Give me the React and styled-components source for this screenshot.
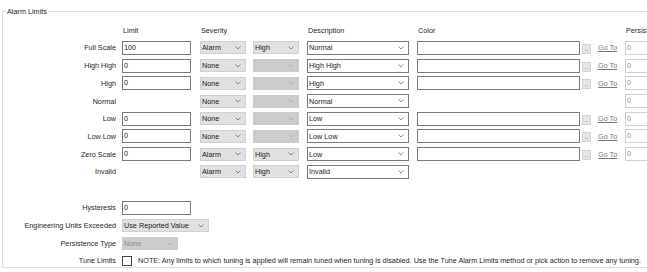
import React from 'react';
import styled, { createGlobalStyle } from 'styled-components';

const GlobalStyle = createGlobalStyle`
  html, body {
    margin: 0;
    padding: 0;
    background: #fff;
  }
  body {
    font-family: "Liberation Sans", Arial, sans-serif;
    font-size: 7.25px;
    color: #262626;
    overflow: hidden;
  }
`;

const Page = styled.div`
  width: 647px;
  height: 272px;
  overflow: hidden;
`;

const Group = styled.fieldset`
  margin: 7px 0 0 2px;
  padding: 0;
  width: 720px;
  min-width: 0;
  border: 1px solid #dedede;
`;

const Legend = styled.legend`
  margin-left: 3px;
  padding: 0 1px;
  line-height: 9px;
`;

const Table = styled.div`
  display: grid;
  grid-template-columns: 119px 78px 53px 54px 110px 165px 16px 27px 80px;
  grid-auto-rows: 14px;
  row-gap: 3.7px;
  align-items: center;
  margin-top: 7.3px;
`;

const Options = styled.div`
  display: grid;
  grid-template-columns: 119px 1fr;
  grid-template-rows: 14px 14px 14px 12px;
  row-gap: 4px;
  align-items: center;
  margin-top: 22px;
`;

const Header = styled.div`
  padding-left: 1px;
  white-space: nowrap;
`;

const Label = styled.div`
  justify-self: end;
  padding-right: 6px;
  white-space: nowrap;
`;

const TextBox = styled.div`
  box-sizing: border-box;
  width: ${(p) => p.$width}px;
  height: 14px;
  padding: 0 1px;
  line-height: 11px;
  border: 1px solid ${(p) => (p.$disabled ? '#cfcfcf' : '#7a7a7a')};
  color: ${(p) => (p.$disabled ? '#8a8a8a' : '#1a1a1a')};
  background: #fff;
  white-space: nowrap;
`;

const comboLook = {
  button: { bg: '#e1e1e1', border: '#d0d0d0', text: '#1a1a1a', arrow: '#6f6f6f', h: 13 },
  list: { bg: '#fff', border: '#7a7a7a', text: '#1a1a1a', arrow: '#6f6f6f', h: 14 },
  disabled: { bg: '#cccccc', border: '#cccccc', text: '#8a8a8a', arrow: '#a8a8a8', h: 13 },
};

const ComboBox = styled.div`
  box-sizing: border-box;
  display: flex;
  align-items: center;
  justify-content: space-between;
  width: ${(p) => p.$width}px;
  height: ${(p) => comboLook[p.$look].h}px;
  padding: 0 4px 0 1px;
  border: 1px solid ${(p) => comboLook[p.$look].border};
  background: ${(p) => comboLook[p.$look].bg};
  color: ${(p) => comboLook[p.$look].text};
  white-space: nowrap;
`;

const Chevron = ({ color }) => (
  <svg width="6" height="4" viewBox="0 0 6 4">
    <polyline points="0.5,0.5 3,3 5.5,0.5" fill="none" stroke={color} strokeWidth="0.8" />
  </svg>
);

const Combo = ({ value, width, look = 'button' }) => (
  <ComboBox $width={width} $look={look}>
    <span>{value}</span>
    <Chevron color={comboLook[look].arrow} />
  </ComboBox>
);

const BrowseButton = styled.div`
  box-sizing: border-box;
  align-self: end;
  width: 9px;
  height: 10px;
  margin-bottom: 1px;
  border: 1px solid #d4d4d4;
  background: #e6e6e6;
  color: #6a6a6a;
  font-size: 5px;
  line-height: 9px;
  letter-spacing: -0.3px;
  text-align: center;
  overflow: hidden;
`;

const GoTo = styled.span`
  color: #7a7a7a;
  text-decoration: underline;
  white-space: nowrap;
`;

const CheckBox = styled.div`
  box-sizing: border-box;
  width: 10px;
  height: 10px;
  border: 1px solid #444;
  background: #fff;
`;

const TuneRow = styled.div`
  display: flex;
  align-items: center;
  gap: 6px;
  white-space: nowrap;
`;

const rows = [
  { name: 'Full Scale', limit: '100', severity: 'Alarm', priority: 'High', desc: 'Normal', color: true, persist: true },
  { name: 'High High', limit: '0', severity: 'None', desc: 'High High', color: true, persist: true },
  { name: 'High', limit: '0', severity: 'None', desc: 'High', color: true, persist: true },
  { name: 'Normal', severity: 'None', desc: 'Normal', persist: true },
  { name: 'Low', limit: '0', severity: 'None', desc: 'Low', color: true, persist: true },
  { name: 'Low Low', limit: '0', severity: 'None', desc: 'Low Low', color: true, persist: true },
  { name: 'Zero Scale', limit: '0', severity: 'Alarm', priority: 'High', desc: 'Low', color: true, persist: true },
  { name: 'Invalid', severity: 'Alarm', priority: 'High', desc: 'Invalid' },
];

const Empty = () => <span />;

export default function App() {
  return (
    <Page>
      <GlobalStyle />
      <Group>
        <Legend>Alarm Limits</Legend>
        <Table>
          <Empty />
          <Header>Limit</Header>
          <Header>Severity</Header>
          <Empty />
          <Header>Description</Header>
          <Header>Color</Header>
          <Empty />
          <Empty />
          <Header>Persistence</Header>
          {rows.map((r) => (
            <React.Fragment key={r.name}>
              <Label>{r.name}</Label>
              {r.limit ? <TextBox $width={69}>{r.limit}</TextBox> : <Empty />}
              <Combo value={r.severity} width={46} />
              {r.priority ? <Combo value={r.priority} width={46} /> : <Combo width={46} look="disabled" />}
              <Combo value={r.desc} width={102} look="list" />
              {r.color ? <TextBox $width={163} /> : <Empty />}
              {r.color ? <BrowseButton>...</BrowseButton> : <Empty />}
              {r.color ? <GoTo>Go To</GoTo> : <Empty />}
              {r.persist ? <TextBox $width={60} $disabled>0</TextBox> : <Empty />}
            </React.Fragment>
          ))}
        </Table>
        <Options>
          <Label>Hysteresis</Label>
          <TextBox $width={69}>0</TextBox>
          <Label>Engineering Units Exceeded</Label>
          <Combo value="Use Reported Value" width={87} />
          <Label>Persistence Type</Label>
          <Combo value="None" width={56} look="disabled" />
          <Label>Tune Limits</Label>
          <TuneRow>
            <CheckBox />
            <span>
              NOTE: Any limits to which tuning is applied will remain tuned when tuning is disabled. Use the Tune Alarm Limits method or pick action to remove any tuning.
            </span>
          </TuneRow>
        </Options>
      </Group>
    </Page>
  );
}
